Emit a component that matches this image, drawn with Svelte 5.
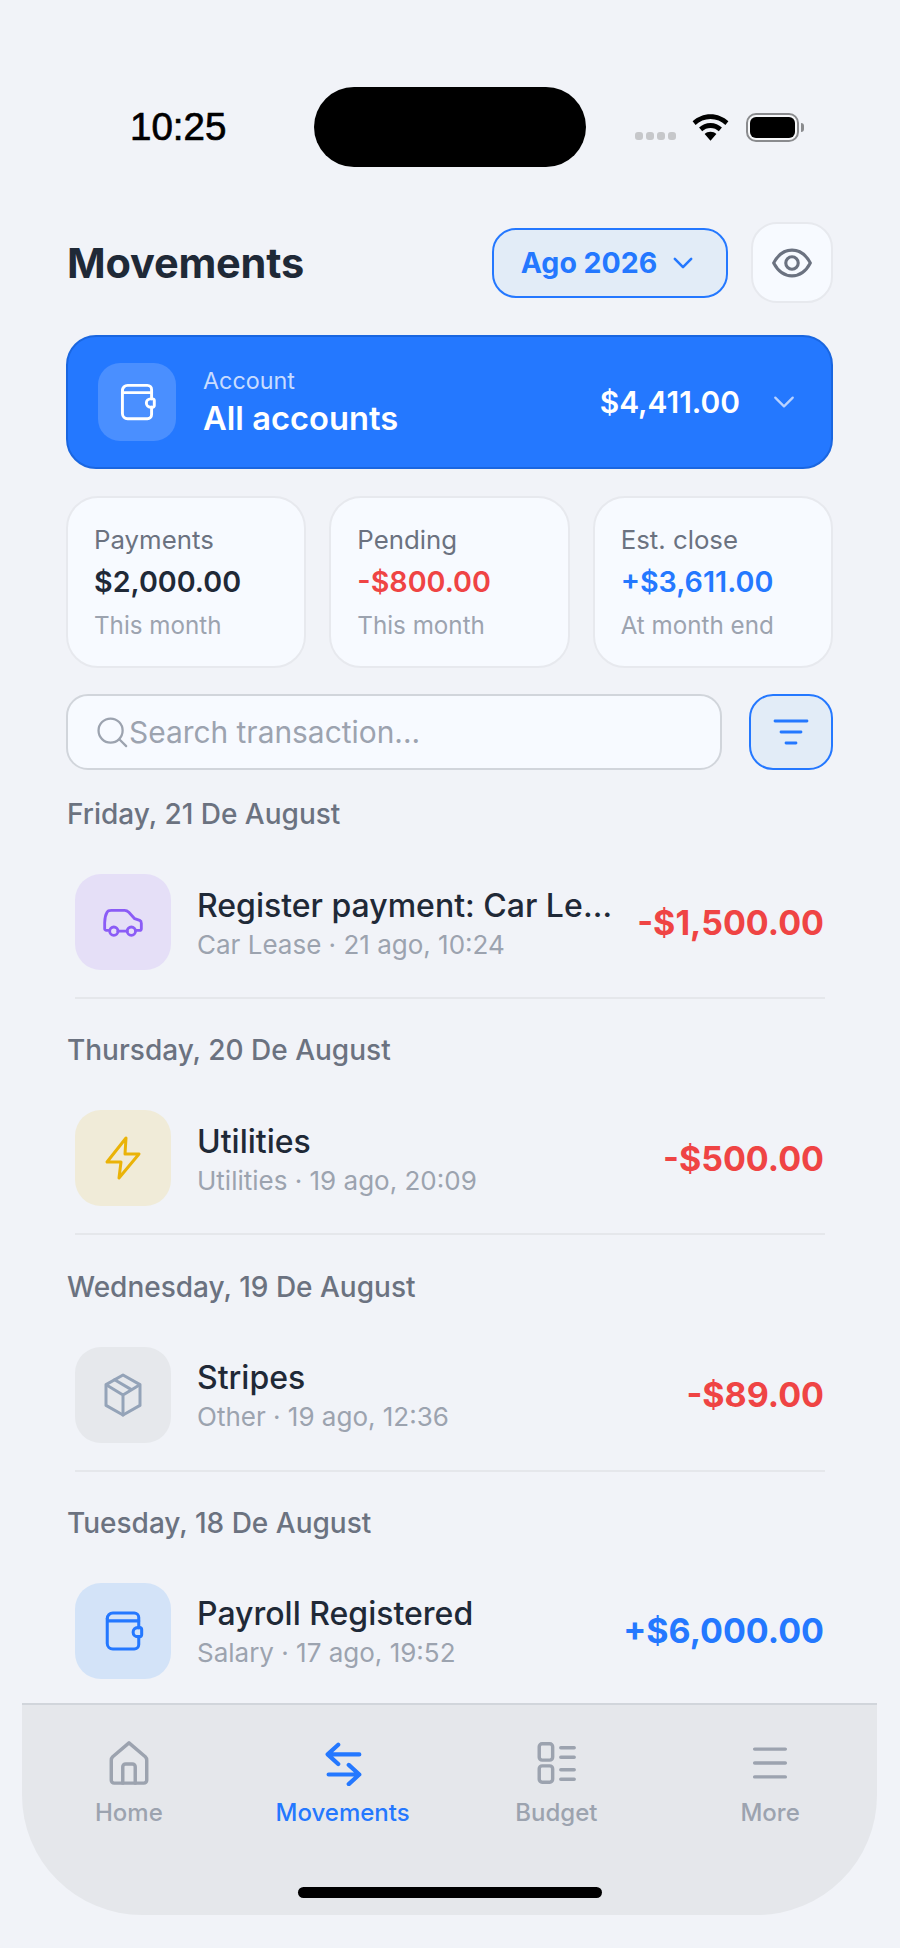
<script lang="ts">
  type Row = { day: string; title: string; sub: string; amount: string; tone: string; icon: string };

  const stats = [
    { label: 'Payments', value: '$2,000.00', note: 'This month', tone: 'dark' },
    { label: 'Pending', value: '-$800.00', note: 'This month', tone: 'red' },
    { label: 'Est. close', value: '+$3,611.00', note: 'At month end', tone: 'blue' }
  ];

  const rows: Row[] = [
    { day: 'Friday, 21 De August', title: 'Register payment: Car Lease', sub: 'Car Lease · 21 ago, 10:24', amount: '-$1,500.00', tone: 'red', icon: 'car' },
    { day: 'Thursday, 20 De August', title: 'Utilities', sub: 'Utilities · 19 ago, 20:09', amount: '-$500.00', tone: 'red', icon: 'zap' },
    { day: 'Wednesday, 19 De August', title: 'Stripes', sub: 'Other · 19 ago, 12:36', amount: '-$89.00', tone: 'red', icon: 'box' },
    { day: 'Tuesday, 18 De August', title: 'Payroll Registered', sub: 'Salary · 17 ago, 19:52', amount: '+$6,000.00', tone: 'blue', icon: 'wallet' }
  ];

  const tabs = [
    { label: 'Home', icon: 'home' },
    { label: 'Movements', icon: 'swap', active: true },
    { label: 'Budget', icon: 'budget' },
    { label: 'More', icon: 'menu' }
  ];
</script>

{#snippet wallet()}
  <path d="M5 6.500A2.500 2.500 0 0 1 7.500 4H17a2 2 0 0 1 2 2v4.500" />
  <path d="M5 6.500v11A2.500 2.500 0 0 0 7.500 20H17a2 2 0 0 0 2-2v-3.500" />
  <path d="M5.500 7.500H19" />
  <path d="M19.500 10.500h-1a2 2 0 0 0 0 4h1a.8 .8 0 0 0 .8-.8v-2.400a.8 .8 0 0 0-.8-.8z" />
{/snippet}

<div class="screen">
  <div class="status">
    <span class="time">10:25</span>
    <div class="island"></div>
    <div class="status-right">
      <div class="dots"><i></i><i></i><i></i><i></i></div>
      <svg class="wifi" viewBox="0 0 36 26">
        <path d="M18 0C11.300 0 5.200 2.600 0.600 6.900L3.500 10.500C7.300 6.900 12.400 4.800 18 4.800s10.700 2.100 14.500 5.700l2.900-3.600C30.800 2.600 24.700 0 18 0z" />
        <path d="M18 8.600c-4.300 0-8.200 1.700-11.100 4.400l3 3.600c2.100-2 5-3.200 8.100-3.200s6 1.200 8.100 3.200l3-3.600C26.200 10.300 22.300 8.600 18 8.600z" />
        <path d="M18 17.200c-2.200 0-4.200 .8-5.700 2.200L18 26l5.700-6.600c-1.500-1.400-3.500-2.200-5.700-2.200z" />
      </svg>
      <div class="battery"><div class="battery-fill"></div></div>
      <div class="battery-cap"></div>
    </div>
  </div>

  <header class="head">
    <h1>Movements</h1>
    <button class="month" type="button">
      Ago 2026
      <svg viewBox="0 0 24 24" class="ico-chev"><path d="M5 8.500l7 7 7-7" /></svg>
    </button>
    <button class="eye" type="button" aria-label="Hide amounts">
      <svg viewBox="0 0 24 24" class="ico-eye">
        <path d="M2 12c2.500-4.700 5.800-7 10-7s7.500 2.300 10 7c-2.500 4.700-5.800 7-10 7s-7.500-2.300-10-7z" />
        <circle cx="12" cy="12" r="3.400" />
      </svg>
    </button>
  </header>

  <div class="account">
    <div class="account-ico">
      <svg viewBox="0 0 24 24" class="ico-account">{@render wallet()}</svg>
    </div>
    <div class="account-text">
      <span class="account-label">Account</span>
      <span class="account-name">All accounts</span>
    </div>
    <span class="account-total">$4,411.00</span>
    <svg viewBox="0 0 24 24" class="account-chev"><path d="M5 8.500l7 7 7-7" /></svg>
  </div>

  <div class="stats">
    {#each stats as s}
      <div class="stat">
        <span class="stat-label">{s.label}</span>
        <span class="stat-value {s.tone}">{s.value}</span>
        <span class="stat-note">{s.note}</span>
      </div>
    {/each}
  </div>

  <div class="search-row">
    <div class="search">
      <svg viewBox="0 0 24 24" class="ico-search"><circle cx="11" cy="11" r="8.500" /><path d="M17.500 17.500L22 22" /></svg>
      <span>Search transaction...</span>
    </div>
    <button class="filter" type="button" aria-label="Filter">
      <svg viewBox="0 0 40 40" class="ico-filter"><path d="M4 9h32M10 20h20M15 31h10" /></svg>
    </button>
  </div>

  <div class="list">
    {#each rows as r, i}
      <div class="day">{r.day}</div>
      <div class="row" class:last={i === rows.length - 1}>
        <div class="row-ico {r.icon}">
          <svg viewBox="0 0 24 24" class="ico">
            {#if r.icon === 'car'}
              <path d="M3 17H2a1 1 0 0 1-1-1v-3.500c0-1.500 .6-5 1.500-6.500C3 5 4 5 5 5h8c1 0 1.800 .5 2.500 1.200L19 10l3 1c.7 .3 1 1 1 1.700V16a1 1 0 0 1-1 1h-2" />
              <circle cx="6.500" cy="17.500" r="2.500" />
              <circle cx="17" cy="17.500" r="2.500" />
              <path d="M9 17.500h5.500" />
            {:else if r.icon === 'zap'}
              <path d="M13.500 2L4 14h7l-1 8 10-12h-7l.5-8z" />
            {:else if r.icon === 'box'}
              <path d="M12 2l8.500 4.800v10.400L12 22l-8.500-4.800V6.800L12 2z" />
              <path d="M3.800 7L12 12l8.200-5M12 12v10M7.800 4.400l8.400 4.900" />
            {:else}
              {@render wallet()}
            {/if}
          </svg>
        </div>
        <div class="row-text">
          <span class="row-title">{r.title}</span>
          <span class="row-sub">{r.sub}</span>
        </div>
        <span class="row-amount {r.tone}">{r.amount}</span>
      </div>
    {/each}
  </div>

  <nav class="tabbar">
    <div class="tabs">
      {#each tabs as t}
        <div class="tab" class:active={t.active}>
          <svg viewBox="0 0 48 48" class="tab-ico">
            {#if t.icon === 'home'}
              <path d="M24 3L7 17.500c-1 1-1.500 2-1.500 3.500V42c0 1.700 1.300 3 3 3h31c1.700 0 3-1.300 3-3V21c0-1.500-.5-2.500-1.500-3.500L24 3z" />
              <path d="M17.500 45V28c0-1.700 1.300-3 3-3h7c1.700 0 3 1.300 3 3v17" />
            {:else if t.icon === 'swap'}
              <path d="M41 15H9M19 5L8 15l11 10M9 36h32M30 26l11 10-11 10" />
            {:else if t.icon === 'budget'}
              <rect x="6.500" y="4" width="14" height="17" rx="3" />
              <rect x="6.500" y="27" width="14" height="17" rx="3" />
              <path d="M29 8h14M29 18h14M29 31h14M29 41h14" />
            {:else}
              <path d="M8 9.500h32M8 24h32M8 38.500h32" />
            {/if}
          </svg>
          <span>{t.label}</span>
        </div>
      {/each}
    </div>
    <div class="home-bar"></div>
  </nav>
</div>

<style>
  :global(body) {
    background: #f1f3f8;
  }
  .screen {
    width: 900px;
    height: 1948px;
    box-sizing: border-box;
    display: flex;
    flex-direction: column;
    overflow: hidden;
    background: #f1f3f8;
    font-family: Inter, 'Liberation Sans', sans-serif;
    color: #1f2937;
  }
  button {
    font-family: inherit;
    cursor: pointer;
  }
  svg {
    fill: none;
    stroke-linecap: round;
    stroke-linejoin: round;
  }
  .status {
    height: 80px;
    margin-top: 87px;
    display: flex;
    align-items: center;
    flex: none;
  }
  .time {
    width: 314px;
    box-sizing: border-box;
    padding-left: 130px;
    font-family: 'Liberation Sans', sans-serif;
    font-size: 38.500px;
    color: #000;
    -webkit-text-stroke: 0.7px #000;
  }
  .island {
    width: 272px;
    height: 80px;
    border-radius: 40px;
    background: #000;
  }
  .status-right {
    display: flex;
    align-items: center;
    margin-left: 49px;
  }
  .dots {
    display: flex;
    gap: 3px;
    margin-top: 18px;
  }
  .dots i {
    width: 8px;
    height: 8px;
    border-radius: 3px;
    background: #c6c7ca;
  }
  .wifi {
    width: 37px;
    height: 27px;
    margin-left: 16px;
    fill: #000;
  }
  .battery {
    width: 53px;
    height: 29px;
    margin-left: 17px;
    box-sizing: border-box;
    border: 2px solid #8a8b8e;
    border-radius: 10px;
    padding: 2px;
    background: #f7f8fa;
  }
  .battery-fill {
    width: 100%;
    height: 100%;
    border-radius: 6px;
    background: #000;
  }
  .battery-cap {
    width: 3px;
    height: 9px;
    margin-left: 2px;
    border-radius: 0 3px 3px 0;
    background: #8a8b8e;
  }
  .head {
    display: flex;
    align-items: center;
    flex: none;
    margin-top: 55px;
    padding: 0 67px;
  }
  h1 {
    flex: 1;
    margin: 0;
    font-size: 41.500px;
    font-weight: 700;
    letter-spacing: -0.2px;
  }
  .month {
    width: 236px;
    height: 70px;
    box-sizing: border-box;
    display: flex;
    align-items: center;
    justify-content: center;
    gap: 12px;
    padding: 0 2px 0 0;
    border: 2px solid #2478ff;
    border-radius: 24px;
    background: #e2ecf7;
    color: #2478ff;
    font-size: 28.500px;
    font-weight: 700;
  }
  .ico-chev {
    width: 28px;
    height: 28px;
    stroke: #2478ff;
    stroke-width: 2.200;
  }
  .eye {
    width: 82px;
    height: 81px;
    margin-left: 23px;
    display: flex;
    align-items: center;
    justify-content: center;
    box-sizing: border-box;
    border: 2px solid #e7e9ee;
    border-radius: 26px;
    background: #f7faff;
  }
  .ico-eye {
    width: 44px;
    height: 44px;
    stroke: #6b7280;
    stroke-width: 1.700;
  }
  .account {
    flex: none;
    height: 134px;
    margin: 32px 67px 0 66px;
    box-sizing: border-box;
    padding: 0 30px;
    display: flex;
    align-items: center;
    border: 2px solid #1a66e0;
    border-radius: 30px;
    background: #2478ff;
    color: #fff;
  }
  .account-ico {
    width: 78px;
    height: 78px;
    display: flex;
    align-items: center;
    justify-content: center;
    border-radius: 22px;
    background: #4a8fff;
    flex: none;
  }
  .ico-account {
    width: 50px;
    height: 50px;
    stroke: #fff;
    stroke-width: 1.400;
  }
  .ico {
    width: 48px;
    height: 48px;
    stroke-width: 1.500;
  }
  .row-ico.car .ico {
    width: 40px;
    height: 40px;
    stroke-width: 1.700;
  }
  .row-ico.wallet .ico {
    width: 54px;
    height: 54px;
    stroke-width: 1.350;
  }
  .account-text {
    display: flex;
    flex-direction: column;
    flex: 1;
    margin-left: 27px;
    gap: 3px;
  }
  .account-label {
    font-size: 23.300px;
    color: #c8dcff;
  }
  .account-name {
    font-size: 32.700px;
    font-weight: 600;
  }
  .account-total {
    font-size: 29.900px;
    font-weight: 600;
  }
  .account-chev {
    width: 30px;
    height: 30px;
    margin-left: 29px;
    margin-right: 2px;
    stroke: #b9d2ff;
    stroke-width: 1.800;
  }
  .stats {
    flex: none;
    display: grid;
    grid-template-columns: repeat(3, 1fr);
    gap: 23px;
    margin: 27px 67px 0 66px;
  }
  .stat {
    height: 172px;
    box-sizing: border-box;
    padding: 26px 26px;
    display: flex;
    flex-direction: column;
    border: 2px solid #e7e9ee;
    border-radius: 32px;
    background: #f7faff;
  }
  .stat-label {
    font-size: 25.800px;
    color: #6b7280;
    line-height: 32px;
  }
  .stat-value {
    margin-top: 9px;
    font-size: 28.700px;
    font-weight: 600;
    line-height: 34px;
  }
  .stat-note {
    margin-top: 12px;
    font-size: 24.200px;
    line-height: 30px;
    color: #9ca3af;
  }
  .dark { color: #1f2937; }
  .red { color: #ef4444; }
  .blue { color: #2478ff; }
  .search-row {
    flex: none;
    display: flex;
    gap: 27px;
    margin: 26px 67px 0 66px;
  }
  .search {
    flex: 1;
    height: 76px;
    box-sizing: border-box;
    padding: 0 27px;
    display: flex;
    align-items: center;
    border: 2px solid #d1d5db;
    border-radius: 22px;
    background: #f7faff;
    color: #9ca3af;
    font-size: 29.900px;
  }
  .ico-search {
    width: 34px;
    height: 34px;
    stroke: #9ca3af;
    stroke-width: 1.600;
    flex: none;
  }
  .filter {
    width: 84px;
    height: 76px;
    padding: 0;
    display: flex;
    align-items: center;
    justify-content: center;
    box-sizing: border-box;
    border: 2px solid #2478ff;
    border-radius: 24px;
    background: #e2ecf7;
  }
  .ico-filter {
    width: 40px;
    height: 40px;
    stroke: #2478ff;
    stroke-width: 2.800;
  }
  .list {
    flex: 1;
    min-height: 0;
    overflow: hidden;
    margin-top: 26px;
    padding: 0 67px;
  }
  .day {
    height: 36px;
    line-height: 36px;
    font-size: 28px;
    font-weight: 500;
    color: #6b7280;
  }
  .row {
    margin: 0 8px 33.300px;
    padding: 42px 1px 27px 0;
    display: flex;
    align-items: center;
    box-sizing: content-box;
    border-bottom: 2px solid #e5e7eb;
  }
  .row.last {
    border-bottom: none;
  }
  .row-ico {
    width: 96px;
    height: 96px;
    flex: none;
    display: flex;
    align-items: center;
    justify-content: center;
    border-radius: 26px;
  }
  .row-ico.car { background: #e5dff7; stroke: #8b5cf6; }
  .row-ico.zap { background: #f0ebd8; stroke: #eab308; }
  .row-ico.box { background: #e6e8ec; stroke: #94a3b8; }
  .row-ico.wallet { background: #d3e3f8; stroke: #2478ff; }
  .row-text {
    flex: 1;
    min-width: 0;
    margin-left: 26px;
    padding-top: 5px;
    display: flex;
    flex-direction: column;
  }
  .row-title {
    font-size: 32px;
    font-weight: 500;
    line-height: 40px;
    white-space: nowrap;
    overflow: hidden;
    text-overflow: ellipsis;
  }
  .row-sub {
    font-size: 26px;
    line-height: 38px;
    color: #9ca3af;
  }
  .row-amount {
    flex: none;
    margin-left: 22px;
    font-size: 34px;
    font-weight: 700;
  }
  .tabbar {
    flex: none;
    height: 212px;
    margin: 0 23px 33px 22px;
    box-sizing: border-box;
    border-top: 2px solid #d1d5db;
    border-radius: 0 0 120px 120px / 0 0 120px 120px;
    background: #e5e7eb;
    display: flex;
    flex-direction: column;
    align-items: center;
  }
  .tabs {
    width: 100%;
    display: grid;
    grid-template-columns: repeat(4, 1fr);
    padding-top: 35px;
  }
  .tab {
    display: flex;
    flex-direction: column;
    align-items: center;
    gap: 12px;
    color: #9ca3af;
    font-size: 24px;
    font-weight: 500;
  }
  .tab.active {
    color: #2478ff;
  }
  .tab-ico {
    width: 46px;
    height: 46px;
    stroke: #9ca3af;
    stroke-width: 3.600;
  }
  .tab.active .tab-ico {
    stroke: #2478ff;
    stroke-width: 4.400;
  }
  .home-bar {
    width: 304px;
    height: 11px;
    margin-top: auto;
    margin-bottom: 17px;
    border-radius: 6px;
    background: #000;
  }
</style>
